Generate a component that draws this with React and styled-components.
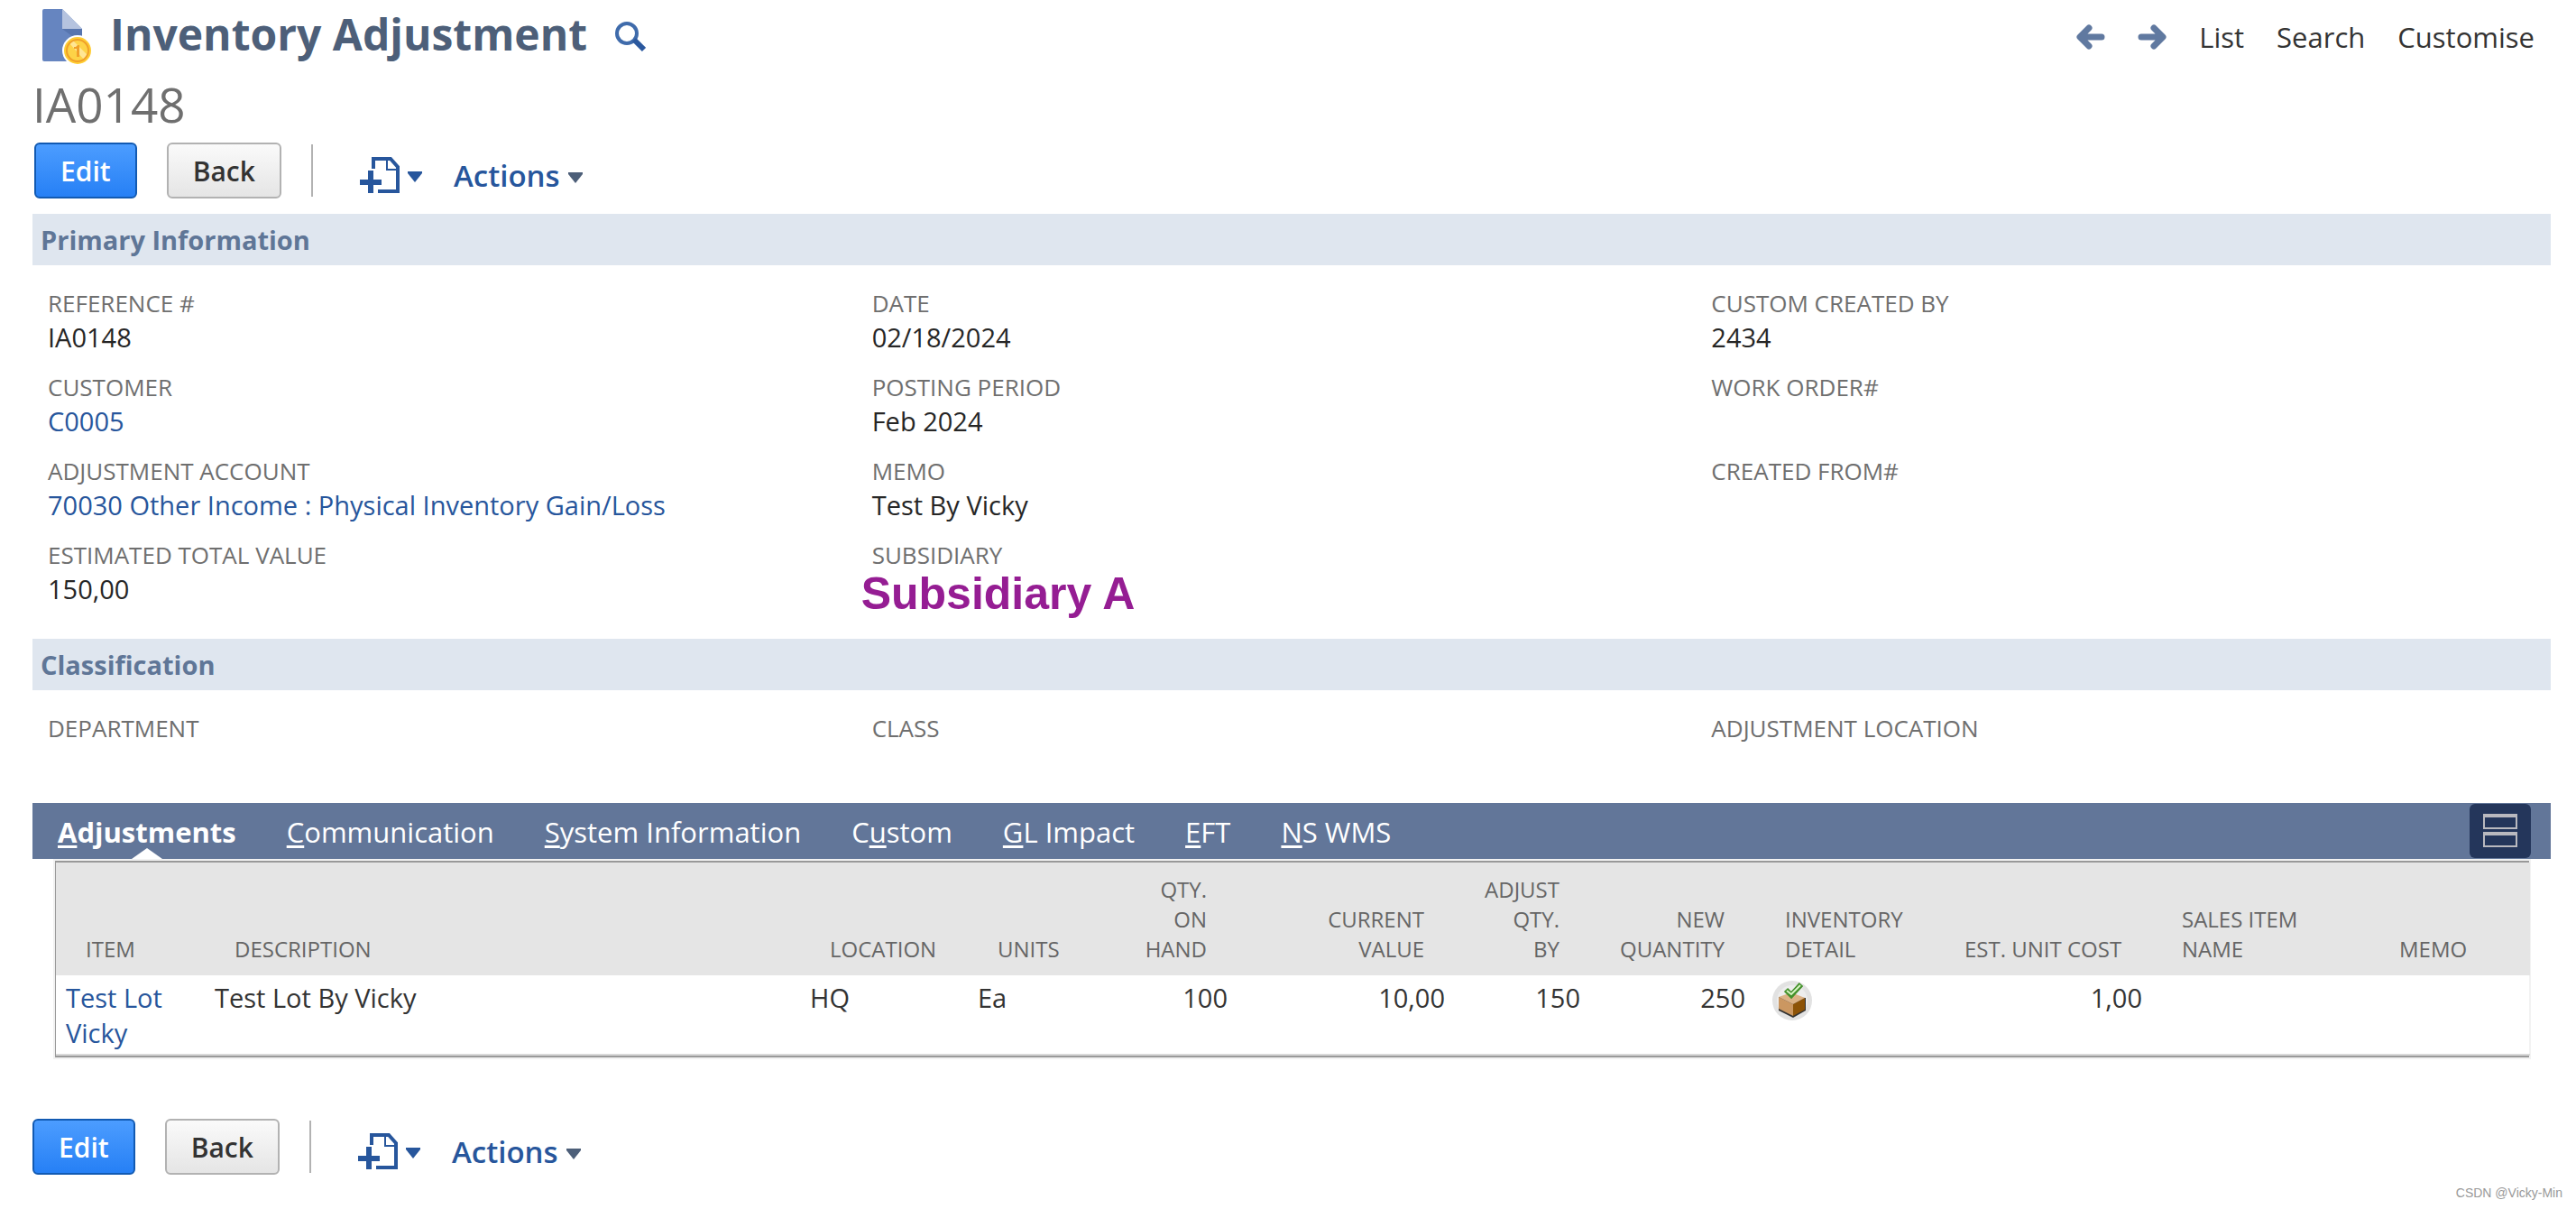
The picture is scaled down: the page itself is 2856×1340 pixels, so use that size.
import React from "react";
import styled, { createGlobalStyle } from "styled-components";

const sections = [
  {
    title: "Primary Information",
    fields: [
      { label: "Reference #", value: "IA0148" },
      { label: "Date", value: "02/18/2024" },
      { label: "Custom Created By", value: "2434" },
      { label: "Customer", value: "C0005", link: true },
      { label: "Posting Period", value: "Feb 2024" },
      { label: "Work Order#" },
      {
        label: "Adjustment Account",
        value: "70030 Other Income : Physical Inventory Gain/Loss",
        link: true,
      },
      { label: "Memo", value: "Test By Vicky" },
      { label: "Created From#" },
      { label: "Estimated Total Value", value: "150,00" },
      { label: "Subsidiary", value: "Subsidiary A", marked: true },
    ],
  },
  {
    title: "Classification",
    fields: [
      { label: "Department" },
      { label: "Class" },
      { label: "Adjustment Location" },
    ],
  },
];

// pos => index of the letter that is underlined (keyboard shortcut)
const tabs = [
  { name: "Adjustments", pos: 0 },
  { name: "Communication", pos: 0 },
  { name: "System Information", pos: 0 },
  { name: "Custom", pos: 1 },
  { name: "GL Impact", pos: 0 },
  { name: "EFT", pos: 0 },
  { name: "NS WMS", pos: 0 },
];

const columns = [
  { name: "Item", width: 165 },
  { name: "Description", width: 660 },
  { name: "Location", width: 186 },
  { name: "Units", width: 155 },
  { name: "Qty. On Hand", width: 144, right: true, wrap: true },
  { name: "Current Value", width: 241, right: true, wrap: true },
  { name: "Adjust Qty. By", width: 150, right: true, wrap: true },
  { name: "New Quantity", width: 183, right: true, wrap: true },
  { name: "Inventory Detail", width: 199, wrap: true },
  { name: "Est. Unit Cost", width: 241, right: true },
  { name: "Sales Item Name", width: 241, wrap: true },
  { name: "Memo", width: 178 },
];

const RecordIcon = () => (
  <svg width="57" height="64" viewBox="0 0 57 64" aria-hidden="true">
    <path d="M3 1h20l22 22v34a2 2 0 0 1-2 2H3a2 2 0 0 1-2-2V3a2 2 0 0 1 2-2z" fill="#6685c0" />
    <path d="M23 23h22v16z" fill="#5775ae" />
    <path d="M23 1l22 22H23z" fill="#b5c3df" />
    <circle cx="40" cy="47" r="17" fill="#fff" />
    <circle cx="40" cy="47" r="15" fill="#ffcd33" />
    <circle cx="40" cy="47" r="12" fill="#fdd347" />
    <path d="M31 39l4-3 16 16-4 5z" fill="#ffe694" />
    <circle cx="40" cy="47" r="12" fill="none" stroke="#f0a029" strokeWidth="2" />
    <path d="M36 43h2l2-2h2v13h-3V45h-3z" fill="#f0a029" />
  </svg>
);

const SearchIcon = () => (
  <svg width="34" height="34" viewBox="0 0 34 34" aria-hidden="true">
    <circle cx="13" cy="13" r="11" fill="none" stroke="#3f6bab" strokeWidth="4" />
    <path d="M21 20l11 11" stroke="#2a589e" strokeWidth="6" />
  </svg>
);

const ArrowIcon = ({ flip }) => (
  <svg width="32" height="28" viewBox="0 0 32 28" aria-hidden="true">
    <path
      d={flip ? "M4 14h23M18 4l10 10-10 10" : "M28 14H5M14 4L4 14l10 10"}
      fill="none"
      stroke="#6079a0"
      strokeWidth="7"
      strokeLinecap="round"
      strokeLinejoin="round"
    />
  </svg>
);

const NewRecordIcon = () => (
  <svg width="44" height="40" viewBox="0 0 44 40" aria-hidden="true">
    <path d="M15 13V2h19l8 9v27H20" fill="none" stroke="#27569c" strokeWidth="4" />
    <path d="M30 3v11h12" fill="none" stroke="#27569c" strokeWidth="2" />
    <path d="M0 28h24M12 15v25" stroke="#27569c" strokeWidth="6" />
  </svg>
);

const Caret = ({ color }) => (
  <svg width="16" height="12" viewBox="0 0 16 12" aria-hidden="true">
    <path d="M0 0h16v2l-8 10L0 2z" fill={color} />
  </svg>
);

const LayoutIcon = () => (
  <svg width="38" height="38" viewBox="0 0 38 38" aria-hidden="true">
    <path d="M1 2v14h36V2M1 22v14h36V22" fill="none" stroke="#b9b9bf" strokeWidth="2" />
    <path d="M0 2h38M0 22h38" stroke="#b9b9bf" strokeWidth="4" />
  </svg>
);

const BoxIcon = () => (
  <svg width="44" height="46" viewBox="0 0 44 46" aria-hidden="true">
    <circle cx="22" cy="22" r="22" fill="#e2e2e2" />
    <circle cx="22" cy="22" r="17" fill="#ededed" />
    <path d="M7 18v15l16 8 14-8V19" fill="#333" />
    <path d="M7 18l16 8v13L7 31z" fill="#cb9761" />
    <path d="M23 26l13-7v13l-13 7z" fill="#8d5307" />
    <path d="M7 18l14-5 15 6-13 7z" fill="#dcb286" />
    <path d="M15 10l6 6L32 4" fill="none" stroke="#43912b" strokeWidth="6" />
    <path d="M16 11l5 4L31 5" fill="none" stroke="#d9f5c5" strokeWidth="2" />
  </svg>
);

const RecordToolbar = () => (
  <Toolbar>
    <Button type="button" $primary>
      Edit
    </Button>
    <Button type="button">Back</Button>
    <Divider />
    <MenuButton type="button" aria-label="Create new">
      <NewRecordIcon />
      <Caret color="#27569c" />
    </MenuButton>
    <MenuButton type="button" $text>
      Actions
      <Caret color="#4d5f79" />
    </MenuButton>
  </Toolbar>
);

const App = () => {
  return (
    <>
      <GlobalStyle />
      <Page>
        <Header>
          <RecordMark>
            <RecordIcon />
          </RecordMark>
          <h1>Inventory Adjustment</h1>
          <IconButton type="button" aria-label="Search">
            <SearchIcon />
          </IconButton>
          <HeaderNav>
            <a href="#prev" aria-label="Previous">
              <ArrowIcon />
            </a>
            <a href="#next" aria-label="Next">
              <ArrowIcon flip />
            </a>
            <a href="#list">List</a>
            <a href="#search">Search</a>
            <a href="#customise">Customise</a>
          </HeaderNav>
        </Header>
        <RecordName>IA0148</RecordName>
        <TopActions>
          <RecordToolbar />
        </TopActions>

        {sections.map(({ title, fields }) => (
          <section key={title}>
            <SectionTitle>{title}</SectionTitle>
            <Fields>
              {fields.map(({ label, value, link, marked }) => (
                <Field key={label}>
                  <dt>{label}</dt>
                  <Value $marked={marked}>
                    {link ? <a href="#record">{value}</a> : value}
                  </Value>
                </Field>
              ))}
            </Fields>
          </section>
        ))}

        <TabBar>
          {tabs.map(({ name, pos }, index) => (
            <Tab key={name} href="#tab" $active={index === 0}>
              {name.slice(0, pos)}
              <u>{name[pos]}</u>
              {name.slice(pos + 1)}
            </Tab>
          ))}
          <LayoutToggle type="button" aria-label="Change layout">
            <LayoutIcon />
          </LayoutToggle>
        </TabBar>

        <TableFrame>
          <Table>
            <colgroup>
              {columns.map(({ name, width }) => (
                <Col key={name} $width={width} />
              ))}
            </colgroup>
            <thead>
              <tr>
                {columns.map(({ name, right, wrap }) => (
                  <HeadCell key={name} $right={right} $wrap={wrap}>
                    {name}
                  </HeadCell>
                ))}
              </tr>
            </thead>
            <tbody>
              <tr>
                <Cell>
                  <a href="#item">Test Lot Vicky</a>
                </Cell>
                <Cell>Test Lot By Vicky</Cell>
                <Cell>HQ</Cell>
                <Cell>Ea</Cell>
                <Cell $right>100</Cell>
                <Cell $right>10,00</Cell>
                <Cell $right>150</Cell>
                <Cell $right>250</Cell>
                <Cell>
                  <DetailButton type="button" aria-label="Inventory detail">
                    <BoxIcon />
                  </DetailButton>
                </Cell>
                <Cell $right>1,00</Cell>
                <Cell />
                <Cell />
              </tr>
            </tbody>
          </Table>
        </TableFrame>

        <RecordToolbar />
        <Credit>CSDN @Vicky-Min</Credit>
      </Page>
    </>
  );
};

const GlobalStyle = createGlobalStyle`
  * {
    box-sizing: border-box;
    margin: 0;
    padding: 0;
  }
  body {
    background: #fff;
    color: #262626;
    font-family: "Open Sans", sans-serif;
    font-size: 29px;
  }
  a {
    color: #27569c;
    text-decoration: none;
  }
  button {
    border: none;
    background: none;
    font-family: inherit;
    cursor: pointer;
  }
  svg {
    display: block;
    flex-shrink: 0;
  }
`;

const Page = styled.main`
  padding: 0 28px 0 36px;
`;

const Header = styled.header`
  display: flex;
  align-items: center;
  padding: 2px 18px 0 10px;
  h1 {
    color: #4d5f79;
    font-size: 48px;
    font-weight: 700;
    line-height: 72px;
  }
`;

const RecordMark = styled.span`
  padding-top: 6px;
  margin-right: 19px;
`;

const IconButton = styled.button`
  margin: 6px 0 0 31px;
`;

const HeaderNav = styled.nav`
  display: flex;
  align-items: center;
  gap: 36px;
  margin: 6px 0 0 auto;
  a {
    color: #333;
    font-size: 31px;
    line-height: 40px;
  }
`;

const RecordName = styled.h2`
  margin-top: 6px;
  color: #6f6f6f;
  font-size: 53px;
  font-weight: 400;
  line-height: 72px;
`;

const TopActions = styled.div`
  padding: 6px 0 17px 2px;
`;

const Toolbar = styled.div`
  display: flex;
  align-items: center;
  height: 62px;
`;

const Button = styled.button`
  height: 62px;
  margin-right: 33px;
  padding: 0 27px;
  border: 2px solid ${({ $primary }) => ($primary ? "#125ab2" : "#b2b2b2")};
  border-radius: 6px;
  background: ${({ $primary }) =>
    $primary
      ? "linear-gradient(#4c9dff, #2680f5)"
      : "linear-gradient(#fafafa, #e5e5e5)"};
  color: ${({ $primary }) => ($primary ? "#fff" : "#333")};
  font-size: 30px;
  font-weight: 600;
`;

const Divider = styled.span`
  width: 2px;
  height: 58px;
  margin-right: 52px;
  background: #b2b2b2;
`;

const MenuButton = styled.button`
  display: flex;
  align-items: center;
  gap: 9px;
  margin: ${({ $text }) => ($text ? "12px 0 0 35px" : "10px 0 0")};
  color: #27569c;
  font-size: 33px;
  font-weight: 600;
  line-height: 40px;
  svg:last-child {
    margin-top: 3px;
  }
`;

const SectionTitle = styled.h3`
  padding-left: 9px;
  background: #dfe6ef;
  color: #5f7697;
  font-size: 29px;
  font-weight: 700;
  line-height: 57px;
`;

const Fields = styled.dl`
  display: grid;
  grid-template-columns: repeat(3, 1fr);
  row-gap: 17px;
  padding: 24px 0 25px;
`;

const Field = styled.div`
  &:nth-child(3n + 1) {
    padding-left: 17px;
  }
  dt {
    color: #6f6f6f;
    font-size: 26px;
    line-height: 36px;
    text-transform: uppercase;
  }
`;

const Value = styled.dd`
  min-height: 40px;
  line-height: 40px;
  ${({ $marked }) =>
    $marked &&
    `
    margin-left: -12px;
    color: #951d93;
    font-family: "Liberation Sans", sans-serif;
    font-size: 50px;
    font-weight: 700;
    line-height: 50px;
  `}
`;

const TabBar = styled.nav`
  display: flex;
  align-items: center;
  gap: 56px;
  height: 62px;
  padding: 0 22px 0 28px;
  background: #627699;
`;

const Tab = styled.a`
  position: relative;
  padding-top: 2px;
  color: #fff;
  font-size: 31px;
  font-weight: ${({ $active }) => ($active ? 700 : 400)};
  line-height: 60px;
  u {
    text-decoration-thickness: 3px;
    text-underline-offset: 3px;
    text-decoration-skip-ink: none;
  }
  /* small pointer under the open tab */
  &::after {
    content: "";
    display: ${({ $active }) => ($active ? "block" : "none")};
    position: absolute;
    left: 50%;
    bottom: 0;
    margin-left: -17px;
    border: 17px solid transparent;
    border-top-width: 0;
    border-bottom: 12px solid #fff;
  }
`;

const LayoutToggle = styled.button`
  display: flex;
  align-items: center;
  justify-content: center;
  width: 68px;
  height: 60px;
  margin-left: auto;
  border-radius: 6px;
  background: #24365b;
`;

const TableFrame = styled.div`
  margin: 2px 24px 68px 25px;
  border-top: 2px solid #999;
  border-left: 1px solid #999;
  border-bottom: 2px solid #999;
  box-shadow: 0 0 0 2px #f2f2f2;
`;

const Table = styled.table`
  width: 100%;
  border-collapse: collapse;
  border-bottom: 2px solid #d9d9d9;
  table-layout: fixed;
`;

const Col = styled.col`
  width: ${({ $width }) => $width}px;
`;

const HeadCell = styled.th`
  padding: 13px 34px 13px 33px;
  background: #e5e5e5;
  color: #666;
  font-size: 24px;
  font-weight: 400;
  line-height: 33px;
  text-align: ${({ $right }) => ($right ? "right" : "left")};
  text-transform: uppercase;
  vertical-align: bottom;
  white-space: ${({ $wrap }) => ($wrap ? "normal" : "nowrap")};
`;

const Cell = styled.td`
  padding: 5px 11px 4px;
  color: #333;
  line-height: 39px;
  text-align: ${({ $right }) => ($right ? "right" : "left")};
  vertical-align: top;
`;

const DetailButton = styled.button`
  display: block;
  height: 39px;
  padding-top: 1px;
  margin-left: 8px;
`;

const Credit = styled.footer`
  padding-top: 10px;
  margin-right: -13px;
  color: #999;
  font-family: "Liberation Sans", sans-serif;
  font-size: 14px;
  line-height: 20px;
  text-align: right;
`;

export default App;
